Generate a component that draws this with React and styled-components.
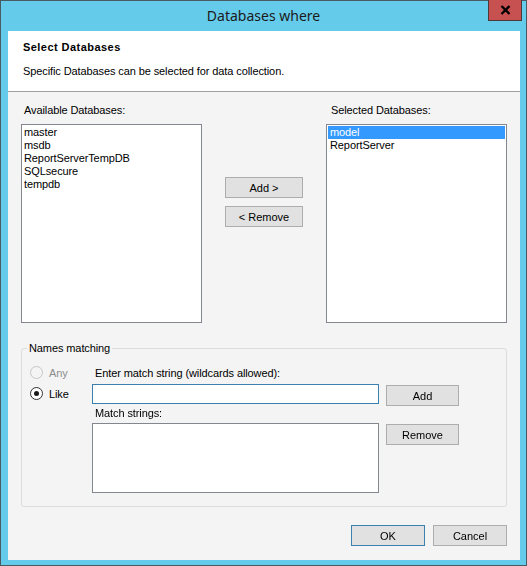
import React, { useState } from 'react'
import styled, { createGlobalStyle } from 'styled-components'

const GlobalStyle = createGlobalStyle`
  html, body {
    margin: 0;
    padding: 0;
    background: #ffffff;
  }
  body {
    font-family: "Liberation Sans", Arial, sans-serif;
    font-size: 11px;
    letter-spacing: -0.1px;
    color: #000;
  }
  * { box-sizing: border-box; }
`

const Window = styled.div`
  width: 527px;
  height: 566px;
  border: 1px solid #4a5a62;
  background: #65cbeb;
  display: flex;
  flex-direction: column;
`

const TitleBar = styled.div`
  height: 30px;
  display: grid;
  grid-template-columns: 1fr auto 1fr;
  align-items: start;
`

const Title = styled.div`
  grid-column: 2;
  font-family: "Noto Sans", "Open Sans", sans-serif;
  font-size: 14px;
  letter-spacing: 0;
  line-height: 30px;
  color: #1a1a1a;
`

const CloseButton = styled.button`
  grid-column: 3;
  justify-self: end;
  margin-right: 4px;
  margin-top: -1px;
  width: 34px;
  height: 21px;
  padding: 0;
  border: 1px solid #4d3b3b;
  border-top: none;
  background: #c75050;
  display: flex;
  align-items: center;
  justify-content: center;
`

const Client = styled.div`
  flex: 1;
  margin: 0 6px 5px 7px;
  background: #f4f4f4;
  display: flex;
  flex-direction: column;
`

const Header = styled.div`
  height: 61px;
  background: #ffffff;
  border-bottom: 1px solid #a0a0a0;
  padding: 10px 15px 0;
`

const HeaderTitle = styled.div`
  font-weight: bold;
  letter-spacing: 0.45px;
  line-height: 13px;
`

const HeaderText = styled.div`
  margin-top: 11px;
  line-height: 13px;
`

const Body = styled.div`
  flex: 1;
  padding: 12px 13px 13px;
  display: flex;
  flex-direction: column;
`

const ListsRow = styled.div`
  display: flex;
  justify-content: space-between;
`

const Column = styled.div`
  display: flex;
  flex-direction: column;
  width: 181px;
`

const Label = styled.div`
  line-height: 13px;
  padding-left: ${p => p.$indent || 0}px;
  margin-top: ${p => p.$top || 0}px;
`

const ListBox = styled.div`
  margin-top: ${p => p.$top ?? 7}px;
  height: ${p => p.$h}px;
  width: ${p => (p.$w ? `${p.$w}px` : 'auto')};
  background: #ffffff;
  border: 1px solid #828790;
  padding: 1px;
  overflow: hidden;
`

const Item = styled.div`
  height: 13px;
  line-height: 13px;
  padding-left: ${p => p.$pad ?? 1}px;
  white-space: nowrap;
  background: ${p => (p.$selected ? '#3399ff' : 'transparent')};
  color: ${p => (p.$selected ? '#ffffff' : '#000')};
`

const MoveButtons = styled.div`
  display: flex;
  flex-direction: column;
  gap: 8px;
  padding-top: 73px;
`

const Button = styled.button`
  width: ${p => p.$w || 75}px;
  height: 21px;
  padding: 0;
  margin-top: ${p => p.$top || 0}px;
  font-family: "Liberation Sans", Arial, sans-serif;
  font-size: 11px;
  color: #000;
  background: #e1e1e1;
  border: 1px solid ${p => (p.$default ? '#3c7fb1' : '#adadad')};
`

const Group = styled.fieldset`
  margin: 18px 0 0;
  padding: 7px 0 13px 8px;
  border: 1px solid #dcdcdc;
  border-radius: 3px;
  min-width: 0;
  display: flex;
`

const Legend = styled.legend`
  margin-left: -3px;
  padding: 0 2px;
  line-height: 14px;
`

const RadioColumn = styled.div`
  width: 62px;
  display: flex;
  flex-direction: column;
`

const RadioRow = styled.label`
  height: 21px;
  display: flex;
  align-items: center;
  gap: 6px;
  color: ${p => (p.$disabled ? '#8d8d8d' : '#000')};
`

const RadioDot = styled.span`
  width: 13px;
  height: 13px;
  border-radius: 50%;
  border: 1px solid ${p => (p.$disabled ? '#c6c6c6' : '#333333')};
  background: ${p => (p.$disabled ? '#f4f4f4' : '#ffffff')};
  display: flex;
  align-items: center;
  justify-content: center;
  &::after {
    content: '';
    width: 5px;
    height: 5px;
    border-radius: 50%;
    background: ${p => (p.$checked ? '#1a1a1a' : 'transparent')};
  }
`

const MatchColumn = styled.div`
  display: flex;
  flex-direction: column;
  padding-top: 5px;
`

const FieldRow = styled.div`
  display: flex;
  align-items: flex-start;
  gap: 7px;
  margin-top: ${p => p.$top || 0}px;
`

const TextInput = styled.input`
  width: 287px;
  height: 20px;
  border: 1px solid #3c7fb1;
  background: #ffffff;
  padding: 0 2px;
  font-family: "Liberation Sans", Arial, sans-serif;
  font-size: 11px;
  outline: none;
  caret-color: #000;
`

const Footer = styled.div`
  margin-top: 18px;
  display: flex;
  justify-content: flex-end;
  gap: 8px;
`

const available = ['master', 'msdb', 'ReportServerTempDB', 'SQLsecure', 'tempdb']
const selected = ['model', 'ReportServer']

export default function App() {
  const [mode, setMode] = useState('like')
  const [match, setMatch] = useState('')

  return (
    <>
      <GlobalStyle />
      <Window>
        <TitleBar>
          <Title>Databases where</Title>
          <CloseButton aria-label="Close">
            <svg width="11" height="10" viewBox="0 0 11 10">
              <path d="M1.5 1 L9.5 9 M9.5 1 L1.5 9" stroke="#000" strokeWidth="2.4" />
            </svg>
          </CloseButton>
        </TitleBar>
        <Client>
          <Header>
            <HeaderTitle>Select Databases</HeaderTitle>
            <HeaderText>Specific Databases can be selected for data collection.</HeaderText>
          </Header>
          <Body>
            <ListsRow>
              <Column>
                <Label $indent={3}>Available Databases:</Label>
                <ListBox $h={199}>
                  {available.map(name => <Item key={name}>{name}</Item>)}
                </ListBox>
              </Column>
              <MoveButtons>
                <Button $w={78}>Add &gt;</Button>
                <Button $w={78}>&lt; Remove</Button>
              </MoveButtons>
              <Column>
                <Label $indent={5}>Selected Databases:</Label>
                <ListBox $h={199}>
                  {selected.map((name, i) => (
                    <Item key={name} $pad={2} $selected={i === 0}>{name}</Item>
                  ))}
                </ListBox>
              </Column>
            </ListsRow>

            <Group>
              <Legend>Names matching</Legend>
              <RadioColumn>
                <RadioRow $disabled>
                  <RadioDot $disabled $checked={mode === 'any'} />
                  Any
                </RadioRow>
                <RadioRow onClick={() => setMode('like')}>
                  <RadioDot $checked={mode === 'like'} />
                  Like
                </RadioRow>
              </RadioColumn>
              <MatchColumn>
                <Label $indent={3}>Enter match string (wildcards allowed):</Label>
                <FieldRow $top={4}>
                  <TextInput autoFocus value={match} onChange={e => setMatch(e.target.value)} />
                  <Button $w={73} $top={1}>Add</Button>
                </FieldRow>
                <Label $indent={3} $top={1}>Match strings:</Label>
                <FieldRow $top={3}>
                  <ListBox $top={0} $h={70} $w={287} />
                  <Button $w={73} $top={1}>Remove</Button>
                </FieldRow>
              </MatchColumn>
            </Group>

            <Footer>
              <Button $w={74} $default>OK</Button>
              <Button $w={74}>Cancel</Button>
            </Footer>
          </Body>
        </Client>
      </Window>
    </>
  )
}
